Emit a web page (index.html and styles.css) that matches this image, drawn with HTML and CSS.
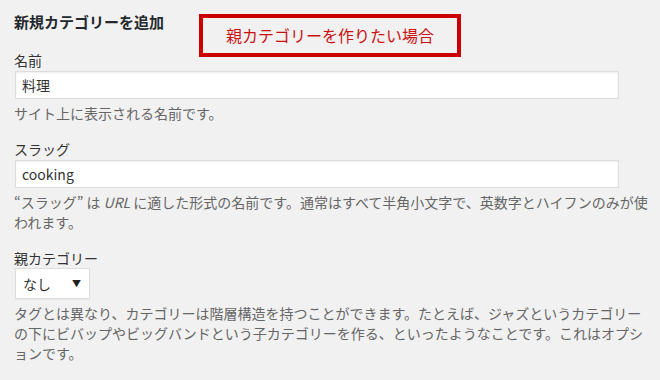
FILE: index.html
```html
<!DOCTYPE html>
<html lang="ja">
<head>
    <meta charset="UTF-8">
    <title>新規カテゴリーを追加</title>
    <link rel="stylesheet" href="styles.css">
</head>
<body>
    <div class="wrap">
        <h2 class="title">新規カテゴリーを追加</h2>
        <div class="note">親カテゴリーを作りたい場合</div>

        <div class="field first">
            <label>名前</label>
            <input class="text" type="text" value="料理">
            <p class="desc">サイト上に表示される名前です。</p>
        </div>

        <div class="field">
            <label>スラッグ</label>
            <input class="text" type="text" value="cooking">
            <p class="desc">“スラッグ” は <i>URL</i> に適した形式の名前です。通常はすべて半角小文字で、英数字とハイフンのみが使われます。</p>
        </div>

        <div class="field">
            <label>親カテゴリー</label>
            <div class="select"><span>なし</span><span class="arrow">▼</span></div>
            <p class="desc">タグとは異なり、カテゴリーは階層構造を持つことができます。たとえば、ジャズというカテゴリーの下にビバップやビッグバンドという子カテゴリーを作る、といったようなことです。これはオプションです。</p>
        </div>
    </div>
</body>
</html>
```

FILE: styles.css
```css
body {
    margin: 0;
    padding: 0;
    background: #f1f1f1;
    font-family: "Noto Sans CJK JP", "Noto Sans", sans-serif;
    color: #444;
}

.wrap {
    position: relative;
    width: 641px;
    padding: 12px 0 0 14px;
}

.title {
    margin: 0;
    font-size: 15px;
    line-height: 20px;
    font-weight: bold;
    color: #23282d;
}

/* annotation laid over the screenshot */
.note {
    position: absolute;
    left: 199px;
    top: 14px;
    width: 254px;
    height: 35px;
    border: 4px solid #cc0000;
    color: #cc1111;
    font-size: 16px;
    line-height: 34px;
    text-align: center;
}

.field {
    margin-top: 16px;
}

.field.first {
    margin-top: 18px;
}

.field label {
    display: block;
    font-size: 14px;
    line-height: 20px;
    color: #333;
}

.text {
    display: block;
    box-sizing: border-box;
    width: 604px;
    height: 28px;
    margin: 1px 0 0 1px;
    padding: 0 6px;
    border: 1px solid #ddd;
    box-shadow: inset 0 1px 2px rgba(0, 0, 0, 0.07);
    background: #fff;
    font-family: inherit;
    font-size: 14px;
    color: #333;
}

.select {
    display: flex;
    justify-content: space-between;
    align-items: center;
    box-sizing: border-box;
    width: 75px;
    height: 31px;
    margin: 0 0 0 1px;
    padding: 0 8px 0 7px;
    border: 1px solid #ddd;
    box-shadow: 0 1px 1px rgba(0, 0, 0, 0.04);
    background: #fff;
    font-size: 14px;
    color: #333;
}

.select .arrow {
    font-size: 9px;
    color: #222;
}

.desc {
    margin: 4px 0 0;
    font-size: 14px;
    line-height: 20px;
    color: #666;
}
```
